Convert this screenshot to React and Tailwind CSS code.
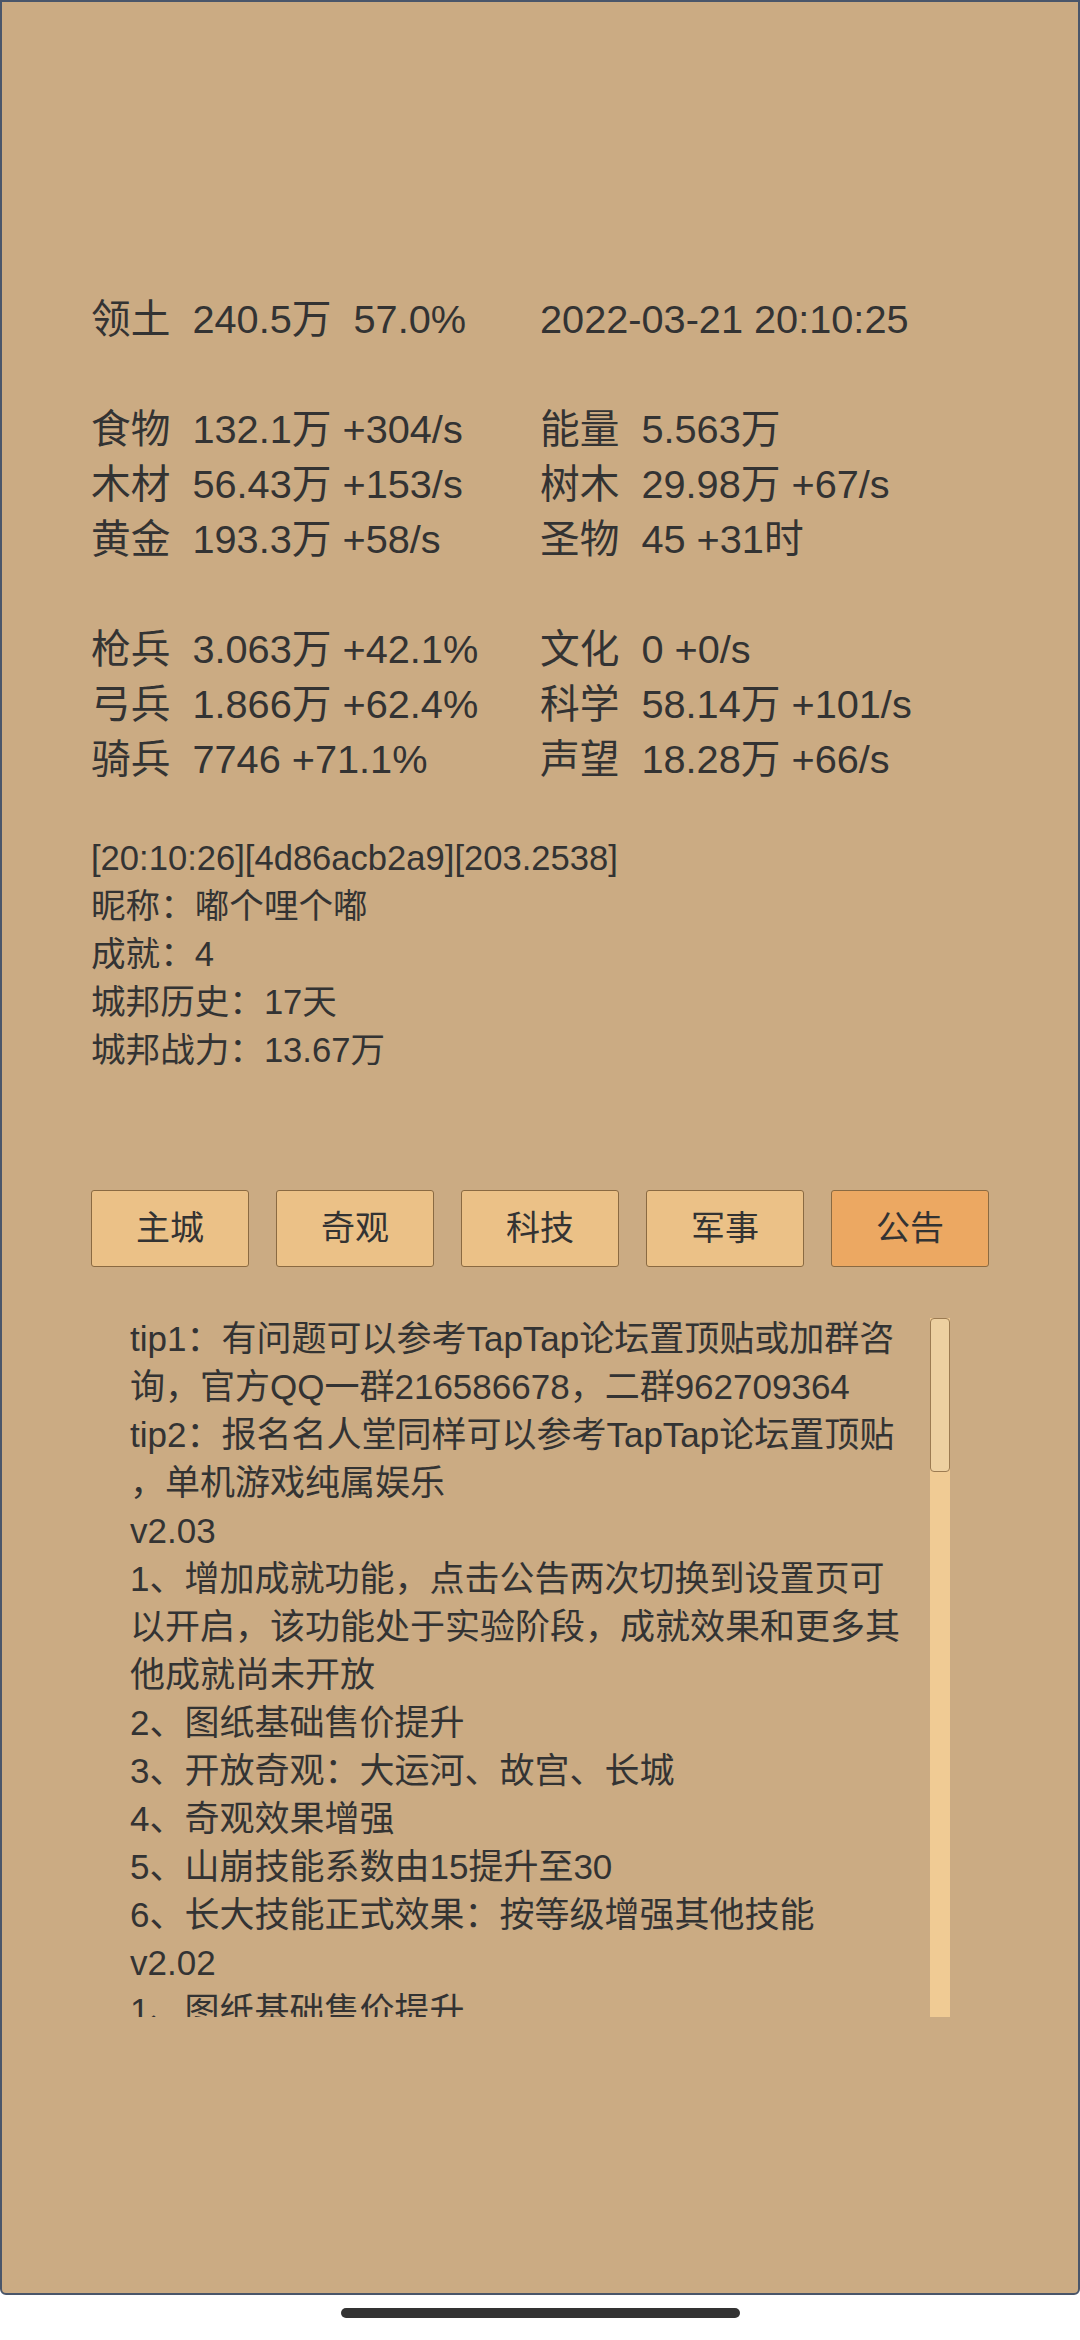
import React from 'react';

const stats = [
  ['领土  240.5万  57.0%', '2022-03-21 20:10:25'],
  ['', ''],
  ['食物  132.1万 +304/s', '能量  5.563万'],
  ['木材  56.43万 +153/s', '树木  29.98万 +67/s'],
  ['黄金  193.3万 +58/s', '圣物  45 +31时'],
  ['', ''],
  ['枪兵  3.063万 +42.1%', '文化  0 +0/s'],
  ['弓兵  1.866万 +62.4%', '科学  58.14万 +101/s'],
  ['骑兵  7746 +71.1%', '声望  18.28万 +66/s'],
];

const info = [
  '[20:10:26][4d86acb2a9][203.2538]',
  '昵称：嘟个哩个嘟',
  '成就：4',
  '城邦历史：17天',
  '城邦战力：13.67万',
];

const tabs = ['主城', '奇观', '科技', '军事', '公告'];

// 公告文字按截图中的换行逐行给出
const notice = [
  'tip1：有问题可以参考TapTap论坛置顶贴或加群咨',
  '询，官方QQ一群216586678，二群962709364',
  'tip2：报名名人堂同样可以参考TapTap论坛置顶贴',
  '，单机游戏纯属娱乐',
  'v2.03',
  '1、增加成就功能，点击公告两次切换到设置页可',
  '以开启，该功能处于实验阶段，成就效果和更多其',
  '他成就尚未开放',
  '2、图纸基础售价提升',
  '3、开放奇观：大运河、故宫、长城',
  '4、奇观效果增强',
  '5、山崩技能系数由15提升至30',
  '6、长大技能正式效果：按等级增强其他技能',
  'v2.02',
  '1、图纸基础售价提升',
];

const App = () => {
  return (
    <div
      className="w-[1080px] h-[2340px] bg-white flex flex-col text-[#333333]"
      style={{ fontFamily: '"Liberation Sans", "Noto Sans CJK SC", sans-serif' }}
    >
      <div className="h-[2295px] border-2 border-[#4a566a] rounded-b-[6px] bg-[#cbab83] flex flex-col px-[89px] pt-[290px]">
        <div className="grid grid-cols-2 text-[39.7px] leading-[55px] whitespace-pre">
          {stats.map(([l, r], i) => (
            <React.Fragment key={i}>
              <div className="h-[55px]">{l}</div>
              <div className="h-[55px]">{r}</div>
            </React.Fragment>
          ))}
        </div>

        <div className="mt-[47px] text-[34.6px] leading-[48px]">
          {info.map((t) => (
            <div key={t}>{t}</div>
          ))}
        </div>

        <div className="mt-[116px] flex gap-[27px]">
          {tabs.map((t) => (
            <button
              key={t}
              className={`w-[158px] h-[77px] border border-[#8a6a42] rounded-[3px] text-[34px] flex items-center justify-center ${
                t === '公告' ? 'bg-[#eca862]' : 'bg-[#ebc187]'
              }`}
            >
              {t}
            </button>
          ))}
        </div>

        <div className="mt-[48px] h-[702px] overflow-hidden flex pl-[39px] pr-[39px]">
          <div className="flex-1 text-[35px] leading-[48px] whitespace-nowrap">
            {notice.map((t, i) => (
              <div key={i}>{t}</div>
            ))}
          </div>
          <div className="w-[20px] mt-[3px] bg-[#f0cb94] flex flex-col">
            <div className="h-[154px] border border-[#9c7b52] rounded-[4px] bg-[#edd0a1]" />
          </div>
        </div>
      </div>
      <div className="mt-[13px] mx-auto w-[399px] h-[10px] rounded-full bg-[#333333]" />
    </div>
  );
};

export default App;
